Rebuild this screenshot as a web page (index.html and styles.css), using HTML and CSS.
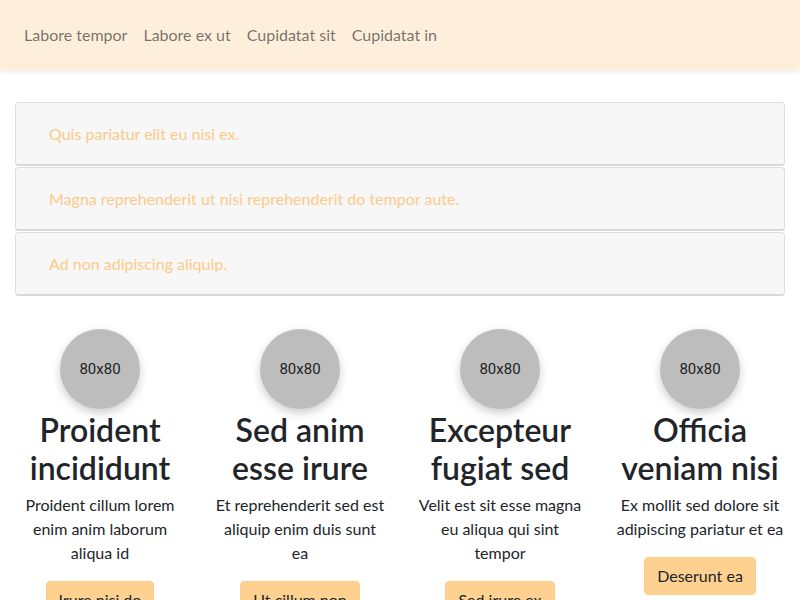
FILE: index.html
```html
<!DOCTYPE html>
<html lang="en">
<head>
<meta charset="utf-8">
<title>Page</title>
<link rel="stylesheet" href="styles.css">
</head>
<body>
<nav class="navbar">
  <a class="nav-link" href="#">Labore tempor</a>
  <a class="nav-link" href="#">Labore ex ut</a>
  <a class="nav-link" href="#">Cupidatat sit</a>
  <a class="nav-link" href="#">Cupidatat in</a>
</nav>
<main class="main">
  <div class="list">
    <div class="list-item">Quis pariatur elit eu nisi ex.</div>
    <div class="list-item">Magna reprehenderit ut nisi reprehenderit do tempor aute.</div>
    <div class="list-item">Ad non adipiscing aliquip.</div>
  </div>
  <div class="features">
    <div class="feature">
      <div class="avatar">80x80</div>
      <h2 class="feature-title">Proident incididunt</h2>
      <p class="feature-text">Proident cillum lorem enim anim laborum aliqua id</p>
      <button class="btn">Irure nisi do</button>
    </div>
    <div class="feature">
      <div class="avatar">80x80</div>
      <h2 class="feature-title">Sed anim esse irure</h2>
      <p class="feature-text">Et reprehenderit sed est aliquip enim duis sunt ea</p>
      <button class="btn">Ut cillum non</button>
    </div>
    <div class="feature">
      <div class="avatar">80x80</div>
      <h2 class="feature-title">Excepteur fugiat sed</h2>
      <p class="feature-text">Velit est sit esse magna eu aliqua qui sint tempor</p>
      <button class="btn">Sed irure ex</button>
    </div>
    <div class="feature">
      <div class="avatar">80x80</div>
      <h2 class="feature-title">Officia veniam nisi</h2>
      <p class="feature-text">Ex mollit sed dolore sit adipiscing pariatur et ea</p>
      <button class="btn">Deserunt ea</button>
    </div>
  </div>
</main>
</body>
</html>
```
FILE: styles.css
```css
* { box-sizing: border-box; }
html, body { margin: 0; padding: 0; }
body {
  font-family: "Lato", "Noto Sans", sans-serif;
  font-size: 16px;
  line-height: 1.5;
  color: #212529;
  background: #fff;
  overflow: hidden;
}
.navbar {
  height: 70px;
  display: flex;
  align-items: center;
  padding: 0 16px;
  background: #feefdc;
  border-bottom-right-radius: 4px;
  box-shadow: 0 2px 5px rgba(0,0,0,0.08);
}
.nav-link {
  padding: 0 8px;
  color: rgba(0,0,0,0.55);
  text-decoration: none;
}
.main {
  padding: 32px 15px 0;
}
.list {
  display: flex;
  flex-direction: column;
  gap: 1px;
}
.list-item {
  height: 64px;
  display: flex;
  align-items: center;
  padding: 0 33px;
  background: #f7f7f7;
  border: 1px solid #dedede;
  border-bottom: 2px solid #d8d8d8;
  border-radius: 4px;
  color: #fdca89;
}
.features {
  display: grid;
  grid-template-columns: repeat(4, 200px);
  margin: 33px -15px 0;
}
.feature {
  display: flex;
  flex-direction: column;
  align-items: center;
  text-align: center;
  padding: 0 15px;
}
.avatar {
  width: 80px;
  height: 80px;
  border-radius: 50%;
  background: #bdbdbd;
  box-shadow: 0 4px 10px rgba(0,0,0,0.2);
  display: flex;
  align-items: center;
  justify-content: center;
  font-family: "Roboto", sans-serif;
  font-size: 15px;
  color: #222;
}
.feature-title {
  margin: 2px 0 6px;
  font-size: 32px;
  line-height: 38px;
  font-weight: 600;
  color: #212529;
}
.feature-text {
  margin: 0 0 16px;
  line-height: 24px;
}
.btn {
  font: inherit;
  color: #212529;
  background: #fed190;
  border: 1px solid #fdcd88;
  border-radius: 4px;
  padding: 6px 12px;
}
```
